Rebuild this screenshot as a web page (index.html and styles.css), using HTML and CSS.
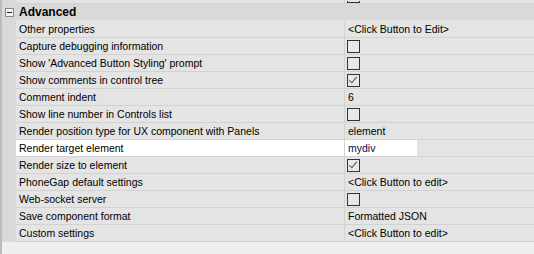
FILE: index.html
```html
<!DOCTYPE html>
<html lang="en">
<head>
    <meta charset="UTF-8">
    <title>Properties - Advanced</title>
    <link rel="stylesheet" href="styles.css">
</head>
<body>
    <div class="grid">
        <!-- tail of the row above, scrolled off -->
        <div class="row partial">
            <div class="gutter"></div>
            <div class="label"></div>
            <div class="value"><span class="check"></span></div>
        </div>

        <div class="row category">
            <div class="gutter"><span class="toggle"></span></div>
            <div class="cat-title">Advanced</div>
        </div>

        <div class="row">
            <div class="gutter"></div>
            <div class="label">Other properties</div>
            <div class="value">&lt;Click Button to Edit&gt;</div>
        </div>
        <div class="row">
            <div class="gutter"></div>
            <div class="label">Capture debugging information</div>
            <div class="value"><span class="check"></span></div>
        </div>
        <div class="row">
            <div class="gutter"></div>
            <div class="label">Show 'Advanced Button Styling' prompt</div>
            <div class="value"><span class="check"></span></div>
        </div>
        <div class="row">
            <div class="gutter"></div>
            <div class="label">Show comments in control tree</div>
            <div class="value"><span class="check checked"></span></div>
        </div>
        <div class="row">
            <div class="gutter"></div>
            <div class="label">Comment indent</div>
            <div class="value">6</div>
        </div>
        <div class="row">
            <div class="gutter"></div>
            <div class="label">Show line number in Controls list</div>
            <div class="value"><span class="check"></span></div>
        </div>
        <div class="row">
            <div class="gutter"></div>
            <div class="label">Render position type for UX component with Panels</div>
            <div class="value">element</div>
        </div>
        <div class="row selected">
            <div class="gutter"></div>
            <div class="label">Render target element</div>
            <div class="value"><span class="editor">mydiv</span></div>
        </div>
        <div class="row">
            <div class="gutter"></div>
            <div class="label">Render size to element</div>
            <div class="value"><span class="check checked"></span></div>
        </div>
        <div class="row">
            <div class="gutter"></div>
            <div class="label">PhoneGap default settings</div>
            <div class="value">&lt;Click Button to edit&gt;</div>
        </div>
        <div class="row">
            <div class="gutter"></div>
            <div class="label">Web-socket server</div>
            <div class="value"><span class="check"></span></div>
        </div>
        <div class="row">
            <div class="gutter"></div>
            <div class="label">Save component format</div>
            <div class="value">Formatted JSON</div>
        </div>
        <div class="row">
            <div class="gutter"></div>
            <div class="label">Custom settings</div>
            <div class="value">&lt;Click Button to edit&gt;</div>
        </div>

        <div class="empty"></div>
    </div>
</body>
</html>
```

FILE: styles.css
```css
html, body {
    margin: 0;
    padding: 0;
    background: #efefef;
}
body {
    font-family: "Liberation Sans", Arial, sans-serif;
    font-size: 10.5px;
    color: #000;
}
.grid {
    width: 534px;
    height: 254px;
    overflow: hidden;
    border-left: 2px solid #bcbcbc;
    box-sizing: border-box;
    display: flex;
    flex-direction: column;
}
.row {
    display: flex;
    height: 17px;
    flex: none;
}
.gutter {
    width: 14px;
    flex: none;
    background: #d9d9d9;
    position: relative;
}
.label {
    width: 325px;
    flex: none;
    padding-left: 3px;
    line-height: 16px;
    background: #e4e4e4;
    border-bottom: 1px solid #d2d2d2;
    border-right: 1px solid #d2d2d2;
    white-space: nowrap;
    overflow: hidden;
}
.value {
    flex: 1;
    padding-left: 3px;
    line-height: 16px;
    background: #e4e4e4;
    border-bottom: 1px solid #d2d2d2;
    white-space: nowrap;
    display: flex;
    align-items: center;
}
.partial {
    height: 4px;
}
.partial .value {
    align-items: flex-end;
}
.partial .check {
    height: 1px;
    border-top: none;
    margin-top: 0;
}
.cat-title {
    flex: 1;
    background: #d9d9d9;
    border-bottom: 1px solid #e6e6e6;
    font-weight: bold;
    font-size: 12px;
    line-height: 16px;
    padding-left: 3px;
}
.toggle {
    position: absolute;
    left: 3px;
    top: 4px;
    width: 7px;
    height: 7px;
    border: 1px solid #8a8a8a;
    background: #f4f4f4;
}
.toggle::after {
    content: "";
    position: absolute;
    left: 1px;
    top: 3px;
    width: 5px;
    height: 1px;
    background: #222;
}
.check {
    width: 11px;
    height: 11px;
    border: 1px solid #333;
    background: #e8e8e8;
    position: relative;
    margin-top: 1px;
    margin-left: -1px;
}
.check.checked::after {
    content: "";
    position: absolute;
    left: 3px;
    top: 0;
    width: 3px;
    height: 7px;
    border-right: 1px solid #555;
    border-bottom: 1px solid #555;
    transform: rotate(40deg);
}
.selected .label {
    background: #fff;
}
.selected .value {
    padding-left: 0;
}
.editor {
    background: #fff;
    width: 69px;
    padding-left: 3px;
    height: 16px;
    color: #0a0a50;
}
.empty {
    flex: 1;
}
```
